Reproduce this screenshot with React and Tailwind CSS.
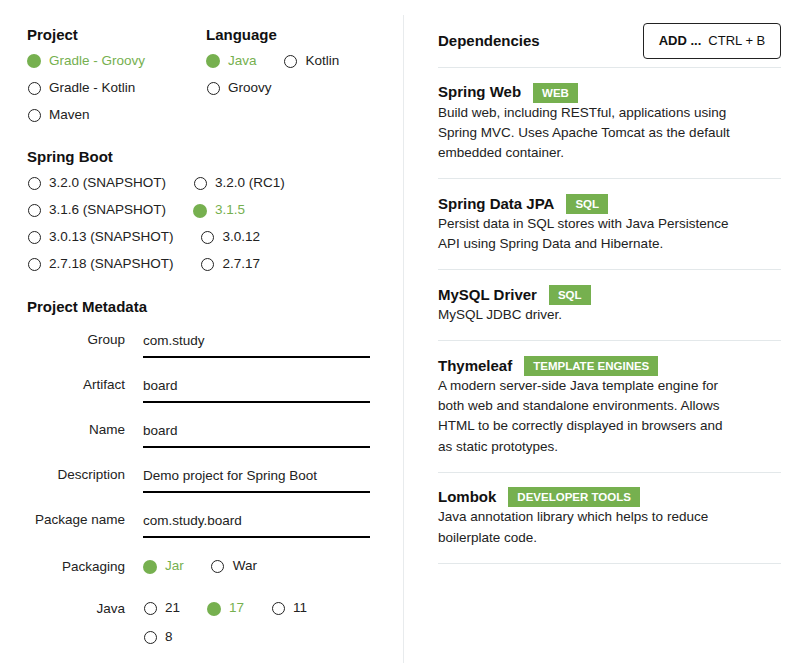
import React from "react";

const Radio = ({ label, checked }) => (
  <div className="flex items-center h-[27px]">
    <span className="w-[14px] h-[14px] flex items-center justify-center">
      {checked ? (
        <span className="w-[14px] h-[14px] rounded-full bg-[#76b04f]" />
      ) : (
        <span className="w-[13px] h-[13px] rounded-full border-[1.5px] border-[#222]" />
      )}
    </span>
    <span className={checked ? "ml-[8px] text-[#76b04f]" : "ml-[8px] text-[#222]"}>{label}</span>
  </div>
);

const Heading = ({ children, className = "" }) => (
  <h3 className={`h-[22px] leading-[22px] text-[15px] font-bold text-[#111] ${className}`}>{children}</h3>
);

const Field = ({ label, value }) => (
  <div className="flex h-[45px]">
    <div className="w-[98px] text-right pt-[7px] leading-[20px] text-[#222]">{label}</div>
    <div className="ml-[18px] w-[227px] h-[35px] pt-[8px] leading-[20px] border-b-2 border-black text-[#222]">
      {value}
    </div>
  </div>
);

const deps = [
  {
    name: "Spring Web",
    tag: "WEB",
    desc: "Build web, including RESTful, applications using Spring MVC. Uses Apache Tomcat as the default embedded container.",
  },
  {
    name: "Spring Data JPA",
    tag: "SQL",
    desc: "Persist data in SQL stores with Java Persistence API using Spring Data and Hibernate.",
  },
  { name: "MySQL Driver", tag: "SQL", desc: "MySQL JDBC driver." },
  {
    name: "Thymeleaf",
    tag: "TEMPLATE ENGINES",
    desc: "A modern server-side Java template engine for both web and standalone environments. Allows HTML to be correctly displayed in browsers and as static prototypes.",
  },
  {
    name: "Lombok",
    tag: "DEVELOPER TOOLS",
    desc: "Java annotation library which helps to reduce boilerplate code.",
  },
];

export default function App() {
  return (
    <div className="flex w-[802px] h-[663px] bg-white text-[13.5px] font-['Liberation_Sans',Arial,sans-serif] overflow-hidden">
      {/* LEFT: project options */}
      <div className="w-[403px] shrink-0 pl-[27px] pt-[24px]">
        <div className="flex">
          <div className="w-[179px]">
            <Heading>Project</Heading>
            <div className="mt-[1.5px]">
              <Radio label="Gradle - Groovy" checked />
              <Radio label="Gradle - Kotlin" />
              <Radio label="Maven" />
            </div>
          </div>
          <div>
            <Heading>Language</Heading>
            <div className="mt-[1.5px] flex flex-wrap w-[165px] gap-x-[27px]">
              <Radio label="Java" checked />
              <Radio label="Kotlin" />
              <Radio label="Groovy" />
            </div>
          </div>
        </div>

        <Heading className="mt-[17.5px]">Spring Boot</Heading>
        <div className="mt-[2px] flex flex-wrap w-[340px] gap-x-[27px]">
          <Radio label="3.2.0 (SNAPSHOT)" />
          <Radio label="3.2.0 (RC1)" />
          <Radio label="3.1.6 (SNAPSHOT)" />
          <Radio label="3.1.5" checked />
          <Radio label="3.0.13 (SNAPSHOT)" />
          <Radio label="3.0.12" />
          <Radio label="2.7.18 (SNAPSHOT)" />
          <Radio label="2.7.17" />
        </div>

        <Heading className="mt-[18px]">Project Metadata</Heading>
        <div className="mt-[5px]">
          <Field label="Group" value="com.study" />
          <Field label="Artifact" value="board" />
          <Field label="Name" value="board" />
          <Field label="Description" value="Demo project for Spring Boot" />
          <Field label="Package name" value="com.study.board" />

          <div className="flex h-[42px] pt-[5px]">
            <div className="w-[98px] text-right leading-[27px] text-[#222]">Packaging</div>
            <div className="ml-[18px] flex gap-x-[27px]">
              <Radio label="Jar" checked />
              <Radio label="War" />
            </div>
          </div>
          <div className="flex pt-[5px]">
            <div className="w-[98px] text-right leading-[27px] text-[#222]">Java</div>
            <div className="ml-[18px] flex flex-wrap w-[200px] gap-x-[27px] gap-y-[2px]">
              <Radio label="21" />
              <Radio label="17" checked />
              <Radio label="11" />
              <Radio label="8" />
            </div>
          </div>
        </div>
      </div>

      {/* RIGHT: dependencies */}
      <div className="flex-1 mt-[15px] border-l border-[#e8ebed] pl-[34px] pr-[21px]">
        <div className="mt-[8px] flex items-center justify-between h-[36px]">
          <h3 className="text-[15px] font-bold text-[#111]">Dependencies</h3>
          <button className="w-[138px] h-[36px] border border-[#222] rounded-[4px] text-[13px] text-[#111] flex items-center justify-center">
            <span className="font-bold">ADD ...</span>
            <span className="ml-[7px]">CTRL + B</span>
          </button>
        </div>
        <div className="mt-[8px] h-px bg-[#e3e8ea]" />

        {deps.map((d) => (
          <div key={d.name} className="pt-[14.5px] pb-[15px] border-b border-[#e3e8ea]">
            <div className="flex items-center h-[20px]">
              <span className="text-[15px] font-bold text-[#111]">{d.name}</span>
              <span className="ml-[12px] h-[20px] px-[9px] bg-[#76b04f] text-white text-[11.5px] font-bold leading-[20px]">
                {d.tag}
              </span>
            </div>
            <p className="max-w-[297px] leading-[20.3px] text-[#222]">{d.desc}</p>
          </div>
        ))}
      </div>
    </div>
  );
}
